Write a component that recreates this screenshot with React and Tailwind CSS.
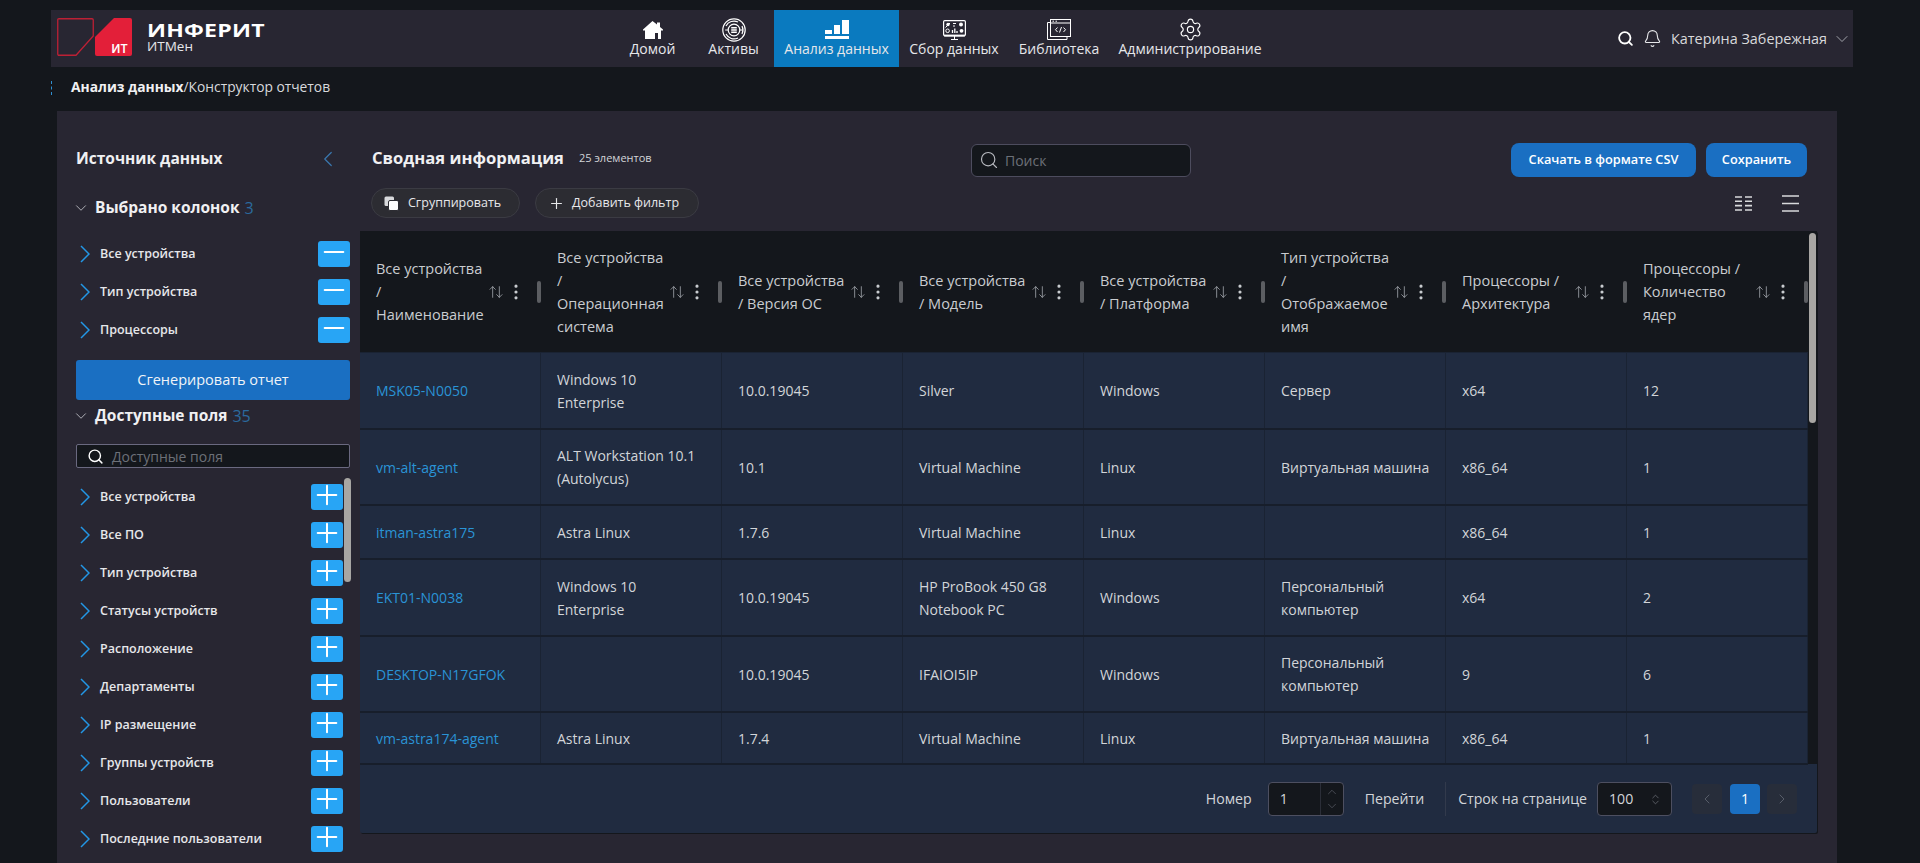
import React from "react";
import { Search, Bell, ChevronDown, ChevronLeft, ChevronRight, ChevronUp, ChevronsUpDown, Plus, Minus, Settings, ArrowUpDown, EllipsisVertical } from "lucide-react";

const navItems = [
  { label: "Домой", width: "w-[81px]", icon: <HomeIcon /> },
  { label: "Активы", width: "w-[81px]", icon: <AssetsIcon /> },
  { label: "Анализ данных", width: "w-[125px]", active: true, icon: <BarsIcon /> },
  { label: "Сбор данных", width: "w-[110px]", icon: <CollectIcon /> },
  { label: "Библиотека", width: "w-[100px]", icon: <LibraryIcon /> },
  { label: "Администрирование", width: "w-[162px]", icon: <Settings size={25} strokeWidth={1.1} /> },
];

const selected = ["Все устройства", "Тип устройства", "Процессоры"];
const available = [
  "Все устройства",
  "Все ПО",
  "Тип устройства",
  "Статусы устройств",
  "Расположение",
  "Департаменты",
  "IP размещение",
  "Группы устройств",
  "Пользователи",
  "Последние пользователи",
];

const columns = [
  ["Все устройства", "/", "Наименование"],
  ["Все устройства", "/", "Операционная", "система"],
  ["Все устройства", "/ Версия ОС"],
  ["Все устройства", "/ Модель"],
  ["Все устройства", "/ Платформа"],
  ["Тип устройства", "/", "Отображаемое", "имя"],
  ["Процессоры /", "Архитектура"],
  ["Процессоры /", "Количество", "ядер"],
];

const rows = [
  { h: "h-[77px]", cells: ["MSK05-N0050", ["Windows 10", "Enterprise"], "10.0.19045", "Silver", "Windows", "Сервер", "x64", "12"] },
  { h: "h-[76px]", cells: ["vm-alt-agent", ["ALT Workstation 10.1", "(Autolycus)"], "10.1", "Virtual Machine", "Linux", "Виртуальная машина", "x86_64", "1"] },
  { h: "h-[54px]", cells: ["itman-astra175", "Astra Linux", "1.7.6", "Virtual Machine", "Linux", "", "x86_64", "1"] },
  { h: "h-[77px]", cells: ["EKT01-N0038", ["Windows 10", "Enterprise"], "10.0.19045", ["HP ProBook 450 G8", "Notebook PC"], "Windows", ["Персональный", "компьютер"], "x64", "2"] },
  { h: "h-[76px]", cells: ["DESKTOP-N17GFOK", "", "10.0.19045", "IFAIOI5IP", "Windows", ["Персональный", "компьютер"], "9", "6"] },
  { h: "h-[52px]", cells: ["vm-astra174-agent", "Astra Linux", "1.7.4", "Virtual Machine", "Linux", "Виртуальная машина", "x86_64", "1"] },
];

function HomeIcon() {
  return (
    <svg width="20" height="18" viewBox="0 0 20 18" fill="currentColor">
      <path fillRule="evenodd" d="M9.5 0 L14 3.6 V1.5 H17 V6 L20 8.5 V9.5 H18 V18 H2 V9.5 H0 V8.5 Z M12 12 V18 H15 V12 Z" />
    </svg>
  );
}

function AssetsIcon() {
  return (
    <svg width="24" height="24" viewBox="0 0 24 24" fill="none" stroke="currentColor" strokeWidth="1.2">
      <circle cx="12" cy="12" r="11.2" />
      <path d="M4 8 A9 9 0 0 1 16 4 M20 8 A9 9 0 0 1 20 16 M16 20 A9 9 0 0 1 4 16 M3.2 12 H6.2 M17.8 12 H20.8" />
      <circle cx="12" cy="12" r="5.8" />
      <path d="M9.2 9.8 H14.8 M9.2 12 H14.8 M9.2 14.2 H14.8" strokeWidth="1.4" />
    </svg>
  );
}

function BarsIcon() {
  return (
    <svg width="24" height="19" viewBox="0 0 24 19" fill="currentColor">
      <rect x="0" y="10" width="7" height="4" />
      <rect x="9" y="5" width="6" height="9" />
      <rect x="17" y="0" width="7" height="14" />
      <rect x="0" y="16" width="24" height="3" />
    </svg>
  );
}

function CollectIcon() {
  return (
    <svg width="23" height="20" viewBox="0 0 23 20" fill="none" stroke="currentColor">
      <rect x="0.6" y="0.6" width="21.8" height="15.2" rx="1.2" strokeWidth="1.2" />
      <path d="M1 15.5 H22" strokeWidth="1.8" />
      <path d="M8 19.5 H15 M11.5 16 V19.5" strokeWidth="1" />
      <circle cx="5" cy="4.5" r="1.7" fill="currentColor" stroke="none" />
      <path d="M2.5 7.5 L7 3" strokeWidth="1" />
      <circle cx="18" cy="4.6" r="2" fill="currentColor" stroke="none" />
      <path d="M10 3.5 H13 M10 6 H12" strokeWidth="1" />
      <circle cx="4.6" cy="10.8" r="1.8" strokeWidth="1" />
      <path d="M9.5 13 V10 M11.8 13 V8.5 M14 13 V11" strokeWidth="1.3" />
      <circle cx="18.5" cy="10.8" r="1.9" fill="currentColor" stroke="none" />
    </svg>
  );
}

function LibraryIcon() {
  return (
    <svg width="24" height="21" viewBox="0 0 24 21" fill="none" stroke="currentColor" strokeWidth="1">
      <rect x="3.5" y="0.5" width="20" height="17" />
      <path d="M3.5 4 H23.5" />
      <path d="M3.5 3.5 H0.5 V20.5 H20 V17.5" />
      <path d="M5.5 2.2 H7 M8.5 2.2 H10" />
      <path d="M10.5 8.5 L8.5 10.7 L10.5 13 M16.5 8.5 L18.5 10.7 L16.5 13 M14.5 8 L12.5 13.5" />
    </svg>
  );
}

function Logo() {
  return (
    <svg width="75" height="38" viewBox="0 0 75 38" className="shrink-0 mb-[4px]">
      <path d="M2 0.75 H35 Q36.25 0.75 36.25 2 V18 L19 37.25 H2 Q0.75 37.25 0.75 36 V2 Q0.75 0.75 2 0.75 Z" fill="none" stroke="#bd2035" strokeWidth="1.3" />
      <path d="M57 0 H73 Q75 0 75 2 V36 Q75 38 73 38 H40 Q38 38 38 36 V19 Z" fill="#e31f39" />
      <text x="54.5" y="35" fill="#fff" fontSize="11.5" fontWeight="600" fontFamily="Inter, sans-serif">ИТ</text>
    </svg>
  );
}

function Divider() {
  return <span className="block w-[4px] h-[22px] rounded-sm bg-[#5c5e62] shrink-0" />;
}

function RowChevron() {
  return (
    <svg width="10" height="18" viewBox="0 0 10 18" fill="none" stroke="#2397e6" strokeWidth="1.5" className="ml-[4px] mr-[10px] shrink-0">
      <path d="M1 1 L9 9 L1 17" />
    </svg>
  );
}

function SideRow({ label, plus }) {
  return (
    <div className="flex items-center h-[38px]">
      <RowChevron />
      <span className="text-[12.5px] font-semibold text-[#e6e7ea]">{label}</span>
      <span className={plus ? "ml-auto mr-[7px] w-[32px] h-[26px] rounded-[3px] bg-[#28a5f5] flex items-center justify-center text-white" : "ml-auto w-[32px] h-[26px] rounded-[3px] bg-[#28a5f5] flex items-center justify-center text-white"}>
        {plus ? <Plus size={32} strokeWidth={1.5} className="-mt-[5px] shrink-0" /> : <Minus size={32} strokeWidth={1.5} className="-mt-[5px] shrink-0" />}
      </span>
    </div>
  );
}

function SectionTitle({ label, count }) {
  return (
    <div className="flex items-center">
      <ChevronDown size={18} strokeWidth={1.1} className="text-[#c8cad0] -ml-[4px]" />
      <span className="ml-[5px] text-[15.5px] font-bold text-[#f0f0f2]">{label}</span>
      <span className="ml-[5px] text-[16px] text-[#2b6a9e]">{count}</span>
    </div>
  );
}

function Sidebar() {
  return (
    <aside className="w-[303px] shrink-0 pl-[19px] pr-[10px] pt-[36px]">
      <div className="flex items-center justify-between h-[24px]">
        <span className="text-[15.5px] font-bold text-[#f0f0f2]">Источник данных</span>
        <ChevronLeft size={26} strokeWidth={1.1} className="text-[#3a78b0] mr-[9px]" />
      </div>
      <div className="mt-[25px]">
        <SectionTitle label="Выбрано колонок" count="3" />
      </div>
      <div className="mt-[15px]">
        {selected.map((s) => (
          <SideRow key={s} label={s} />
        ))}
      </div>
      <button className="mt-[11px] w-full h-[40px] rounded-[3px] bg-[#1a6fc2] text-[14.5px] font-medium text-[#f0f4f8]">
        Сгенерировать отчет
      </button>
      <div className="mt-[4px]">
        <SectionTitle label="Доступные поля" count="35" />
      </div>
      <div className="mt-[16px] h-[24px] flex items-center gap-[8px] px-[10px] rounded-[2px] bg-[#14171c] border-[1.5px] border-[#6a6980]">
        <Search size={17} strokeWidth={2} className="text-white" />
        <span className="text-[14px] text-[#6c7078]">Доступные поля</span>
      </div>
      <div className="relative mt-[10px]">
        {available.map((s) => (
          <SideRow key={s} label={s} plus />
        ))}
        <span className="absolute -right-[1px] top-0 w-[7px] h-[104px] rounded-full bg-[#a8a6a3]" />
      </div>
    </aside>
  );
}

function HeaderCell({ lines }) {
  return (
    <div className="w-[181px] shrink-0 flex items-center pl-[16px]">
      <div className="w-[112px] shrink-0 text-[14.5px] leading-[23px] text-[#c9ccd0]">
        {lines.map((l, i) => (
          <div key={i}>{l}</div>
        ))}
      </div>
      <ArrowUpDown size={16} strokeWidth={1.2} className="text-[#a4a8ae] shrink-0" />
      <EllipsisVertical size={20} strokeWidth={1.8} className="ml-[2px] text-[#c9ccd0] shrink-0" />
      <span className="ml-auto"><Divider /></span>
    </div>
  );
}

function BodyCell({ value, link }) {
  const lines = Array.isArray(value) ? value : [value];
  return (
    <div className={link ? "w-[181px] shrink-0 flex flex-col justify-center pl-[16px] border-r border-[#1a2333] text-[14px] leading-[23px] text-[#2a94d6]" : "w-[181px] shrink-0 flex flex-col justify-center pl-[16px] border-r border-[#1a2333] text-[14px] leading-[23px] text-[#d2d5d9]"}>
      {lines.map((l, i) => (
        <div key={i}>{l}</div>
      ))}
    </div>
  );
}

function DataTable() {
  return (
    <div className="relative mt-[13px] mr-[20px] bg-[#202b40] rounded-[2px] shadow-[1px_1px_0_#14171c]">
      <div className="mr-[9px] overflow-hidden">
        <div className="flex h-[122px] bg-[#14171c] border-b border-[#1a2333]">
          {columns.map((c, i) => (
            <HeaderCell key={i} lines={c} />
          ))}
        </div>
        {rows.map((r, i) => (
          <div key={i} className={r.h + " flex border-b-2 border-[#171e2b]"}>
            {r.cells.map((c, j) => (
              <BodyCell key={j} value={c} link={j === 0} />
            ))}
          </div>
        ))}
      </div>
      <div className="absolute right-0 top-0 bottom-[69px] w-[9px] bg-[#14171c]">
        <span className="block mx-auto mt-[2px] w-[7px] h-[190px] rounded-full bg-[#a8a6a3]" />
      </div>
      <div className="h-[68px] flex items-center justify-end pr-[20px] text-[14.15px] text-[#d2d5d9]">
        <span>Номер</span>
        <div className="ml-[16px] w-[76px] h-[34px] flex rounded-[4px] bg-[#14171c] border border-[#4d4f60]">
          <span className="flex-1 pl-[11px] leading-[32px]">1</span>
          <span className="w-[23px] border-l border-[#2b2e38] flex flex-col items-center justify-center text-[#5b5f68]">
            <ChevronUp size={14} strokeWidth={1.2} />
            <ChevronDown size={14} strokeWidth={1.2} />
          </span>
        </div>
        <span className="ml-[21px]">Перейти</span>
        <span className="ml-[21px] w-px h-[34px] bg-[#323a4c]" />
        <span className="ml-[12px]">Строк на странице</span>
        <div className="ml-[10px] w-[75px] h-[34px] flex items-center rounded-[4px] bg-[#14171c] border border-[#4d4f60] pl-[11px] pr-[9px]">
          <span className="flex-1">100</span>
          <ChevronsUpDown size={13} strokeWidth={1.2} className="text-[#7b7f88]" />
        </div>
        <span className="ml-[20px] w-[30px] h-[30px] rounded-[4px] bg-[#272d3a] flex items-center justify-center text-[#5f6570]">
          <ChevronLeft size={16} strokeWidth={1.3} />
        </span>
        <span className="ml-[8px] w-[30px] h-[30px] rounded-[4px] bg-[#1a6fc2] flex items-center justify-center text-white">1</span>
        <span className="ml-[7px] w-[30px] h-[30px] rounded-[4px] bg-[#272d3a] flex items-center justify-center text-[#5f6570]">
          <ChevronRight size={16} strokeWidth={1.3} />
        </span>
      </div>
    </div>
  );
}

function GroupIcon() {
  return (
    <svg width="15" height="15" viewBox="0 0 15 15" fill="none">
      <rect x="0.5" y="0.5" width="9.5" height="9.5" rx="1.5" fill="#d8d9dc" />
      <rect x="4.5" y="4.5" width="10" height="10" rx="1.5" fill="#fff" stroke="#2c2c32" />
    </svg>
  );
}

function ViewIcons() {
  return (
    <div className="ml-auto mr-[38px] flex items-center gap-[30px] text-[#d8d9dc]">
      <svg width="17" height="15" viewBox="0 0 17 15" stroke="currentColor" strokeWidth="1.6">
        <path d="M0 1 H7 M10 1 H17 M0 5.3 H7 M10 5.3 H17 M0 9.6 H7 M10 9.6 H17 M0 14 H7 M10 14 H17" />
      </svg>
      <svg width="17" height="17" viewBox="0 0 17 17" stroke="currentColor" strokeWidth="1.4">
        <path d="M0 1 H17 M0 8.5 H17 M0 16 H17" />
      </svg>
    </div>
  );
}

function MainArea() {
  return (
    <section className="flex-1 min-w-0 pt-[31px]">
      <div className="flex items-center h-[36px]">
        <h1 className="w-[192px] ml-[12px] mb-[3px] text-[16.6px] font-bold whitespace-nowrap text-[#f0f0f2]">Сводная информация</h1>
        <span className="w-[72px] ml-[15px] mb-[3px] text-[11px] whitespace-nowrap text-[#d2d5d9]">25 элементов</span>
        <div className="ml-[320px] w-[220px] h-[33px] flex items-center gap-[6px] pl-[7px] rounded-[6px] bg-[#14171c] border border-[#4d4c5e]">
          <Search size={20} strokeWidth={1.4} className="text-[#b8bac0]" />
          <span className="text-[14px] text-[#6c7078]">Поиск</span>
        </div>
        <button className="ml-auto w-[185px] h-[34px] rounded-[8px] bg-[#1a6fc2] text-[12.75px] font-semibold text-white">Скачать в формате CSV</button>
        <button className="ml-[10px] mr-[30px] w-[101px] h-[34px] rounded-[8px] bg-[#1a6fc2] text-[12.75px] font-semibold text-white">Сохранить</button>
      </div>
      <div className="flex items-center mt-[10px] h-[30px] pl-[11px]">
        <button className="w-[149px] h-[30px] flex items-center gap-[9px] pl-[12px] rounded-full bg-[#2c2c32] border border-[#3b3b43] text-[12.5px] font-medium text-[#e6e7ea]">
          <GroupIcon /> Сгруппировать
        </button>
        <button className="ml-[15px] w-[164px] h-[30px] flex items-center gap-[7px] pl-[12px] rounded-full bg-[#2c2c32] border border-[#3b3b43] text-[12.5px] font-medium text-[#e6e7ea]">
          <Plus size={17} strokeWidth={1.6} /> Добавить фильтр
        </button>
        <ViewIcons />
      </div>
      <DataTable />
    </section>
  );
}

export default function App() {
  return (
    <div className="h-[863px] overflow-hidden bg-[#14171c] font-['Open_Sans',sans-serif] text-white">
      <header className="ml-[51px] mr-[67px] mt-[10px] h-[57px] bg-[#282632] flex">
        <div className="w-[561px] shrink-0 pl-[6px] flex items-center">
          <Logo />
          <div className="ml-[15px] mb-[3px] leading-none">
            <div className="origin-left scale-x-[1.28] text-[18px] font-bold tracking-[0.01em] text-white">ИНФЕРИТ</div>
            <div className="mt-[1px] text-[13.5px] text-[#e6e7ea]">ИТМен</div>
          </div>
        </div>
        <nav className="flex">
          {navItems.map((n) => (
            <div key={n.label} className={(n.active ? "bg-[#0a7abf] " : "") + n.width + " flex flex-col items-center justify-end pb-[9px] text-[#e6e7ea]"}>
              <div className="h-[27px] flex items-center pt-[6px] text-white">{n.icon}</div>
              <span className="text-[14px] leading-[18px] whitespace-nowrap">{n.label}</span>
            </div>
          ))}
        </nav>
        <div className="ml-auto mr-[1px] flex items-center">
          <Search size={17} strokeWidth={2.6} className="text-white" />
          <Bell size={19} strokeWidth={1.4} className="ml-[9px] text-[#e6e7ea]" />
          <span className="ml-[9px] text-[14.4px] text-[#d8d9dc]">Катерина Забережная</span>
          <ChevronDown size={20} strokeWidth={1} className="ml-[5px] text-[#b8bac0]" />
        </div>
      </header>
      <div className="ml-[51px] h-[44px] flex items-center pb-[3px]">
        <span className="h-[14px] border-l border-dashed border-[#2f8fd0]" />
        <span className="ml-[19px] text-[13.8px] font-bold text-[#f0f0f2]">Анализ данных</span>
        <span className="text-[13.8px] text-[#d8d9dc]">/Конструктор отчетов</span>
      </div>
      <main className="ml-[57px] mr-[83px] h-[752px] overflow-hidden bg-[#282632] flex">
        <Sidebar />
        <MainArea />
      </main>
    </div>
  );
}
